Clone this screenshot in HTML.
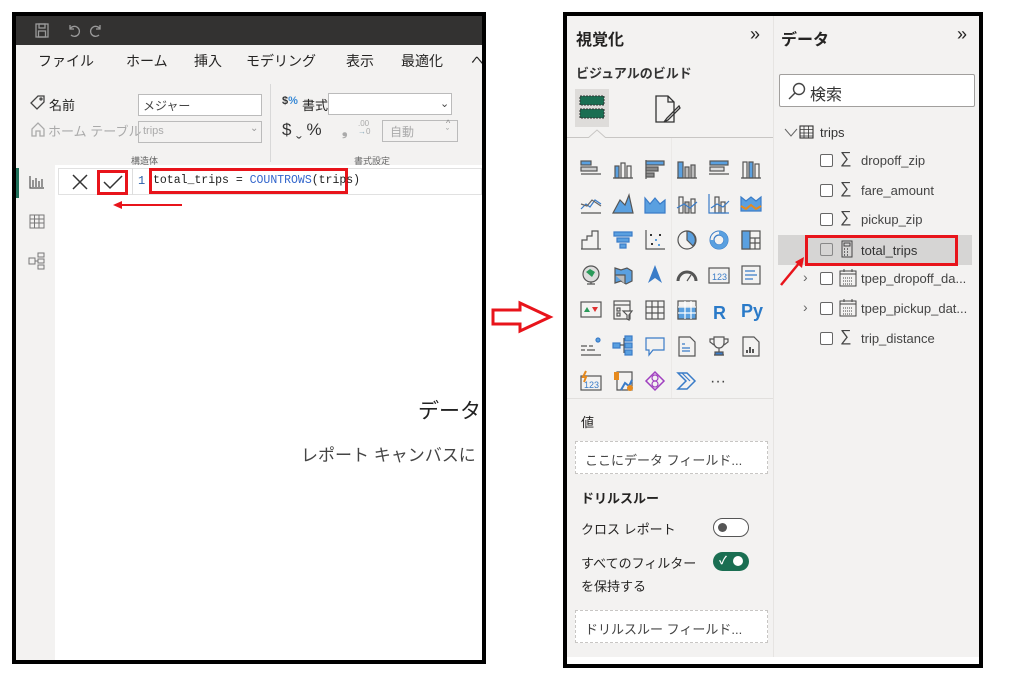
<!DOCTYPE html>
<html><head><meta charset="utf-8"><style>
*{margin:0;padding:0;box-sizing:border-box}
body{width:1024px;height:700px;background:#fff;position:relative;overflow:hidden;font-family:"Liberation Sans","Noto Sans CJK JP",sans-serif;color:#252423}
.a{position:absolute}
.t{position:absolute;white-space:nowrap}
.mono{font-family:"Liberation Mono","Noto Sans CJK JP",monospace}
</style></head><body>

<!-- LEFT PANEL -->
<div class="a" style="left:12px;top:12px;width:474px;height:652px;border:4px solid #000;background:#fff;overflow:hidden">
  <div class="a" style="left:0;top:0;width:466px;height:29px;background:#333231"></div>
  <svg class="a" style="left:18px;top:6px" width="80" height="18" viewBox="0 0 80 18" fill="none" stroke="#9a9a9a" stroke-width="1.3">
    <rect x="2" y="2" width="12" height="13"/><rect x="5" y="2" width="6" height="4"/><rect x="4.5" y="9" width="7" height="6"/>
    <path d="M36 7a5 5 0 1 1 1 6M36 3v4h4"/><path d="M66 7a5 5 0 1 0 -1 6M66 3v4h-4"/>
  </svg>
  <div class="a" style="left:0;top:29px;width:466px;height:120px;background:#f3f2f1"></div>
  <div class="t" style="left:22px;top:35px;font-size:14px">ファイル</div>
  <div class="t" style="left:110px;top:35px;font-size:14px">ホーム</div>
  <div class="t" style="left:178px;top:35px;font-size:14px">挿入</div>
  <div class="t" style="left:230px;top:35px;font-size:14px">モデリング</div>
  <div class="t" style="left:330px;top:35px;font-size:14px">表示</div>
  <div class="t" style="left:385px;top:35px;font-size:14px">最適化</div>
  <div class="t" style="left:455px;top:35px;font-size:14px">へ</div>
  <svg class="a" style="left:14px;top:79px" width="16" height="16" fill="none" stroke="#444" stroke-width="1.3"><path d="M8 1h6v6l-7 7-6-6z"/><circle cx="11" cy="4" r="1"/></svg>
  <div class="t" style="left:33px;top:79px;font-size:13px">名前</div>
  <div class="a" style="left:122px;top:78px;width:124px;height:22px;background:#fff;border:1px solid #bbb"></div>
  <div class="t" style="left:127px;top:81px;font-size:12px;color:#444">メジャー</div>
  <svg class="a" style="left:14px;top:105px" width="16" height="16" fill="none" stroke="#aaa" stroke-width="1.3"><path d="M2 8l6-6 6 6v7H10v-5H6v5H2z"/></svg>
  <div class="t" style="left:32px;top:105px;font-size:13px;color:#aaa">ホーム テーブル</div>
  <div class="a" style="left:122px;top:105px;width:124px;height:22px;border:1px solid #bbb"></div>
  <div class="t" style="left:127px;top:109px;font-size:11px;color:#aaa">trips</div>
  <div class="t" style="left:234px;top:107px;font-size:10px;color:#999">⌄</div>
  <div class="t" style="left:115px;top:138px;font-size:9px;color:#666">構造体</div>
  <div class="a" style="left:254px;top:68px;width:1px;height:78px;background:#d8d8d8"></div>
  <div class="t" style="left:266px;top:79px;font-size:11px;font-weight:bold;color:#333">$<span style="color:#3a8ad6">%</span></div>
  <div class="t" style="left:286px;top:79px;font-size:13px">書式</div>
  <div class="a" style="left:312px;top:77px;width:124px;height:22px;background:#fff;border:1px solid #bbb"></div>
  <div class="t" style="left:424px;top:81px;font-size:11px;color:#444">⌄</div>
  <div class="t" style="left:266px;top:104px;font-size:17px;color:#333">$ ˬ %</div>
  <div class="t" style="left:326px;top:106px;font-size:14px;color:#aaa;font-weight:bold">❟</div>
  <div class="t" style="left:342px;top:104px;font-size:8px;color:#aaa;line-height:8px">.00<br><span style="color:#8ab">→</span>0</div>
  <div class="a" style="left:366px;top:104px;width:76px;height:22px;border:1px solid #bbb"></div>
  <div class="t" style="left:374px;top:107px;font-size:12px;color:#aaa">自動</div>
  <div class="t" style="left:430px;top:103px;font-size:9px;color:#888;line-height:9px">^<br>ˇ</div>
  <div class="t" style="left:338px;top:138px;font-size:9px;color:#666">書式設定</div>

  <div class="a" style="left:0;top:149px;width:39px;height:503px;background:#f3f2f1"></div>
  <div class="a" style="left:0;top:152px;width:3px;height:30px;background:#1f6f5a"></div>
  <svg class="a" style="left:13px;top:159px" width="16" height="14" fill="none" stroke="#555" stroke-width="1.2"><path d="M1 1v12h14M4 12V5M7 12V3M10 12V6M13 12V4"/></svg>
  <svg class="a" style="left:13px;top:198px" width="16" height="15" fill="none" stroke="#777" stroke-width="1"><rect x="1" y="1" width="14" height="13"/><path d="M1 5h14M1 9h14M5.5 1v13M10 1v13"/></svg>
  <svg class="a" style="left:12px;top:236px" width="18" height="18" fill="none" stroke="#777" stroke-width="1"><rect x="1" y="6" width="6" height="6"/><rect x="10" y="1" width="6" height="4"/><rect x="10" y="7" width="6" height="4"/><rect x="10" y="13" width="6" height="4"/><path d="M7 9h3"/></svg>

  <div class="a" style="left:42px;top:152px;width:424px;height:27px;background:#fff;border:1px solid #e1e1e1"></div>
  <div class="a" style="left:116px;top:152px;width:1px;height:27px;background:#ddd"></div>
  <svg class="a" style="left:55px;top:157px" width="18" height="18" stroke="#333" stroke-width="1.5"><path d="M2 2l14 14M16 2L2 16"/></svg>
  <div class="a" style="left:81px;top:154px;width:31px;height:25px;border:3px solid #e8141b"></div>
  <svg class="a" style="left:86px;top:158px" width="22" height="16" fill="none" stroke="#333" stroke-width="1.5"><path d="M2 8l6 6L20 2"/></svg>
  <div class="t mono" style="left:122px;top:158px;font-size:12px;color:#2a5fa8">1</div>
  <div class="a" style="left:133px;top:152px;width:199px;height:26px;border:3px solid #e8141b"></div>
  <div class="t mono" style="left:137px;top:158px;font-size:11.5px;color:#222">total_trips = <span style="color:#3366cc">COUNTROWS</span>(trips)</div>
  <svg class="a" style="left:96px;top:184px" width="72" height="10"><path d="M70 5H8" stroke="#e8141b" stroke-width="2"/><path d="M1 5l9-4v8z" fill="#e8141b"/></svg>

  <div class="t" style="left:402px;top:379px;font-size:21px;color:#222">データ</div>
  <div class="t" style="left:285px;top:425px;font-size:17px;color:#444">レポート キャンバスに</div>
</div>

<svg class="a" style="left:490px;top:300px" width="66" height="34"><path d="M3 10h27V3l30 14-30 14v-7H3z" fill="#fff" stroke="#e8141b" stroke-width="3"/></svg>

<!-- RIGHT PANEL -->
<div class="a" style="left:563px;top:12px;width:420px;height:656px;border:4px solid #000;background:#f3f2f1;overflow:hidden">
  <div class="a" style="left:0;top:641px;width:412px;height:8px;background:#fff"></div>
  <div class="a" style="left:206px;top:0;width:1px;height:641px;background:#e6e4e2"></div>
  <div class="t" style="left:9px;top:10px;font-size:16px;font-weight:bold">視覚化</div>
  <div class="t" style="left:183px;top:8px;font-size:18px">»</div>
  <div class="t" style="left:9px;top:47px;font-size:13px;font-weight:bold;color:#333">ビジュアルのビルド</div>
  <div class="a" style="left:8px;top:73px;width:34px;height:38px;background:#dedcda"></div>
  <svg class="a" style="left:12px;top:78px" width="26" height="28"><rect x="1" y="2" width="24" height="9" fill="#1a6e52" stroke="#333" stroke-dasharray="2 1"/><rect x="1" y="15" width="24" height="9" fill="#1a6e52" stroke="#333" stroke-dasharray="2 1"/></svg>
  <svg class="a" style="left:86px;top:78px" width="30" height="32" fill="none" stroke="#333" stroke-width="1.3"><path d="M3 2h12l6 6v20H3zM15 2v6h6"/><path d="M26 12L14 24l-3 4 4-2 12-12z"/></svg>
  <div class="a" style="left:0;top:121px;width:206px;height:1px;background:#c8c6c4"></div>
  <svg class="a" style="left:21px;top:113px" width="18" height="9"><path d="M0 9L9 1l9 8" fill="#f3f2f1" stroke="#c8c6c4"/></svg>
  <div class="a" style="left:104px;top:122px;width:1px;height:260px;background:#ebe9e7"></div>

  <svg class="a" style="left:6px;top:134px" width="200" height="250" font-family="Liberation Sans,sans-serif">
    <g stroke="#555" stroke-width="1.2" fill="none">
    <g transform="translate(8,10)"><rect x="0" y="1" width="10" height="4" fill="#5aa0e0"/><rect x="0" y="7" width="16" height="4" fill="#ccc"/><path d="M0 14h20"/></g>
    <g transform="translate(40,10)"><rect x="2" y="6" width="4" height="12" fill="#5aa0e0"/><rect x="8" y="3" width="4" height="15"/><rect x="14" y="6" width="4" height="12"/><path d="M0 18h20"/></g>
    <g transform="translate(72,10)"><path d="M1 0v19"/><rect x="1" y="1" width="18" height="4" fill="#5aa0e0"/><rect x="1" y="7" width="12" height="4" fill="#888"/><rect x="1" y="13" width="8" height="4" fill="#888"/></g>
    <g transform="translate(104,10)"><rect x="1" y="2" width="5" height="16" fill="#5aa0e0"/><rect x="8" y="7" width="4" height="11" fill="#bbb"/><rect x="14" y="5" width="4" height="13" fill="#bbb"/><path d="M0 18h20"/></g>
    <g transform="translate(136,10)"><rect x="1" y="1" width="18" height="4" fill="#5aa0e0"/><rect x="1" y="7" width="14" height="4" fill="#ddd"/><path d="M0 14h20"/></g>
    <g transform="translate(168,10)"><rect x="2" y="2" width="4" height="16"/><rect x="8" y="2" width="4" height="16" fill="#5aa0e0"/><rect x="14" y="4" width="4" height="14"/><path d="M0 18h20"/></g>
    <g transform="translate(8,44)"><path d="M0 15l5-5 4 3 5-7 6 4" stroke="#3a7cc8"/><path d="M0 10l6 2 5-6 9 6" stroke="#666"/><path d="M0 19h20"/></g>
    <g transform="translate(40,44)"><path d="M0 19l7-13 5 5 4-10 4 18z" fill="#5aa0e0"/></g>
    <g transform="translate(72,44)"><path d="M0 4l5 6 5-6 5 6 5-4v13H0z" fill="#5aa0e0" stroke="#3a7cc8"/></g>
    <g transform="translate(104,44)"><rect x="2" y="3" width="4" height="16"/><rect x="8" y="8" width="4" height="11" fill="#bbb"/><rect x="14" y="5" width="4" height="14"/><path d="M0 14l7-4 6 4 7-6" stroke="#3a7cc8"/></g>
    <g transform="translate(136,44)"><rect x="6" y="3" width="4" height="16"/><rect x="12" y="8" width="4" height="11"/><path d="M0 0v19h20M2 14l6-4 6 3 6-6" stroke="#3a7cc8"/></g>
    <g transform="translate(168,44)"><path d="M0 3l5 4 5-4 5 4 5-4v14H0z" fill="#5aa0e0" stroke="#3a7cc8"/><path d="M0 12l5 3 5-4 5 4 5-3" stroke="#e68a1e" stroke-width="2"/></g>
    <g transform="translate(8,80)"><path d="M1 19V10h5v-4h5v-5h6v18"/><path d="M0 19h20"/></g>
    <g transform="translate(40,80)"><path d="M1 2h18v4H1zM4 8h12v4H4zM7 14h6v4H7z" fill="#5aa0e0" stroke="#3a7cc8"/></g>
    <g transform="translate(72,80)"><path d="M1 0v19h19"/><rect x="5" y="4" width="2" height="2" fill="#333" stroke="none"/><rect x="10" y="9" width="2" height="2" fill="#5aa0e0" stroke="none"/><rect x="14" y="4" width="2" height="2" fill="#333" stroke="none"/><rect x="6" y="13" width="2" height="2" fill="#333" stroke="none"/><rect x="13" y="14" width="2" height="2" fill="#5aa0e0" stroke="none"/></g>
    <g transform="translate(104,80)"><circle cx="10" cy="10" r="9"/><path d="M10 1a9 9 0 0 1 6 15L10 10z" fill="#5aa0e0"/></g>
    <g transform="translate(136,80)"><circle cx="10" cy="10" r="9" stroke="#3a7cc8" stroke-width="1"/><circle cx="10" cy="10" r="5" stroke="#3a7cc8"/><path d="M10 1a9 9 0 1 1 -9 9h4a5 5 0 1 0 5 -5z" fill="#5aa0e0" stroke="none"/></g>
    <g transform="translate(168,80)"><rect x="1" y="1" width="18" height="18"/><rect x="1" y="1" width="8" height="18" fill="#5aa0e0"/><path d="M9 8h10M9 13h10M14 8v11"/></g>
    <g transform="translate(8,115)"><circle cx="10" cy="9" r="8" fill="#ddd"/><path d="M5 7l4-3 5 3-3 5z" fill="#2a9a5a" stroke="none"/><path d="M6 19h8M10 17v2"/></g>
    <g transform="translate(40,115)"><path d="M2 3l6 2 6-2 5 3v10l-6 3-5-3-6 2z" fill="#5aa0e0" stroke="#555"/><path d="M2 10h10v9" fill="#bbb"/></g>
    <g transform="translate(72,115)"><path d="M10 0L3 18l7-5 7 5z" fill="#3a7cc8" stroke="none"/></g>
    <g transform="translate(104,115)"><path d="M1 16a9 9 0 0 1 18 0" stroke-width="3"/><path d="M10 16l4-6"/></g>
    <g transform="translate(136,115)"><rect x="0" y="3" width="20" height="15"/><text x="3" y="15" font-size="9" fill="#3a7cc8" stroke="none">123</text></g>
    <g transform="translate(168,115)"><rect x="1" y="1" width="18" height="18"/><path d="M4 6h10M4 10h12M4 14h8" stroke="#3a7cc8"/></g>
    <g transform="translate(8,150)"><rect x="0" y="2" width="20" height="15"/><path d="M3 12l3-5 3 5z" fill="#2a9a5a" stroke="none"/><path d="M11 7h6l-3 5z" fill="#e03030" stroke="none"/></g>
    <g transform="translate(40,150)"><rect x="1" y="1" width="16" height="18"/><path d="M1 5h16"/><rect x="4" y="8" width="3" height="3"/><rect x="4" y="13" width="3" height="3"/><path d="M10 11h9l-3 4v5l-2-1v-4z" fill="#f3f2f1"/></g>
    <g transform="translate(72,150)"><rect x="1" y="1" width="18" height="18"/><path d="M1 7h18M1 13h18M7 1v18M13 1v18"/></g>
    <g transform="translate(104,150)"><rect x="1" y="1" width="18" height="18"/><rect x="1" y="7" width="18" height="12" fill="#5aa0e0"/><path d="M1 7h18M1 13h18M8 1v18M14 1v18" stroke="#fff"/></g>
    <text x="140" y="169" font-size="18" font-weight="bold" fill="#2a7ac8" stroke="none">R</text>
    <text x="168" y="167" font-size="18" font-weight="bold" fill="#2a7ac8" stroke="none">Py</text>
    <g transform="translate(8,186)"><path d="M0 10h6M8 10h4M0 14h4M6 14h8M0 19h20"/><circle cx="17" cy="4" r="2" fill="#5aa0e0" stroke="#3a7cc8"/></g>
    <g transform="translate(40,186)"><rect x="0" y="7" width="7" height="5" fill="#5aa0e0" stroke="#3a7cc8"/><path d="M7 9h4M11 2v15"/><rect x="12" y="0" width="7" height="5" fill="#5aa0e0" stroke="#3a7cc8"/><rect x="12" y="7" width="7" height="5" fill="#5aa0e0" stroke="#3a7cc8"/><rect x="12" y="14" width="7" height="5" fill="#5aa0e0" stroke="#3a7cc8"/></g>
    <g transform="translate(72,186)"><path d="M1 2h18v12H8l-4 5v-5H1z" stroke="#3a7cc8"/></g>
    <g transform="translate(104,186)"><path d="M2 1h11l5 5v14H2z"/><path d="M5 8h3M5 12h8M5 15h8" stroke="#3a7cc8"/></g>
    <g transform="translate(136,186)"><path d="M5 1h10v6a5 5 0 0 1-10 0zM5 3H1v3l4 3M15 3h4v3l-4 3M10 12v4M5 19h10"/><rect x="6" y="16" width="8" height="3" fill="#3a7cc8"/></g>
    <g transform="translate(168,186)"><path d="M2 1h11l5 5v14H2z"/><path d="M6 17v-3M9 17v-6M12 17v-4" stroke-width="2"/></g>
    <g transform="translate(8,221)"><rect x="0" y="5" width="20" height="14"/><text x="3" y="17" font-size="9" fill="#3a7cc8" stroke="none">123</text><path d="M5 0l-3 6h3l-2 5" stroke="#e68a1e" stroke-width="2"/></g>
    <g transform="translate(40,221)"><path d="M4 1h15v18H4z"/><path d="M8 19l4-7 4 3 3-6" stroke="#3a7cc8" stroke-width="2"/><rect x="1" y="1" width="5" height="8" fill="#e68a1e" stroke="none"/><circle cx="17" cy="17" r="3" fill="#e68a1e" stroke="none"/></g>
    <g transform="translate(72,221)"><path d="M10 1l9 9-9 9-9-9z" stroke="#a040c0" stroke-width="1.5"/><circle cx="10" cy="7" r="3" stroke="#a040c0"/><circle cx="10" cy="13" r="3" stroke="#a040c0"/></g>
    <g transform="translate(104,221)"><path d="M1 2h9l8 8-8 8H1l8-8z" stroke="#3a7cc8" stroke-width="1.5"/><path d="M5 2l8 8" stroke="#3a7cc8"/></g>
    <text x="137" y="236" font-size="16" fill="#444" stroke="none">···</text>
    </g>
  </svg>
  <div class="a" style="left:0;top:382px;width:206px;height:1px;background:#e1dfdd"></div>
  <div class="t" style="left:14px;top:396px;font-size:13px">値</div>
  <div class="a" style="left:8px;top:425px;width:193px;height:33px;background:#fff;border:1px dashed #c8c6c4"></div>
  <div class="t" style="left:18px;top:434px;font-size:13px;color:#444">ここにデータ フィールド...</div>
  <div class="t" style="left:14px;top:472px;font-size:13px;font-weight:bold">ドリルスルー</div>
  <div class="t" style="left:14px;top:503px;font-size:13px">クロス レポート</div>
  <div class="a" style="left:146px;top:502px;width:36px;height:19px;border:1px solid #555;border-radius:10px;background:#fff"></div>
  <div class="a" style="left:151px;top:507px;width:9px;height:9px;border-radius:50%;background:#555"></div>
  <div class="t" style="left:14px;top:537px;font-size:13px">すべてのフィルター</div>
  <div class="a" style="left:146px;top:536px;width:36px;height:19px;border-radius:10px;background:#1a6e52"></div>
  <div class="t" style="left:152px;top:536px;font-size:11px;color:#fff;font-weight:bold">✓</div>
  <div class="a" style="left:166px;top:540px;width:10px;height:10px;border-radius:50%;background:#fff"></div>
  <div class="t" style="left:14px;top:560px;font-size:13px">を保持する</div>
  <div class="a" style="left:8px;top:594px;width:193px;height:33px;background:#fff;border:1px dashed #c8c6c4"></div>
  <div class="t" style="left:18px;top:603px;font-size:13px;color:#444">ドリルスルー フィールド...</div>

  <div class="t" style="left:214px;top:10px;font-size:16px;font-weight:bold">データ</div>
  <div class="t" style="left:390px;top:8px;font-size:18px">»</div>
  <div class="a" style="left:212px;top:58px;width:196px;height:33px;background:#fff;border:1px solid #a19f9d;border-radius:2px"></div>
  <svg class="a" style="left:221px;top:66px" width="18" height="18" fill="none" stroke="#444" stroke-width="1.4"><circle cx="11" cy="7" r="5.5"/><path d="M7 11L1 17"/></svg>
  <div class="t" style="left:243px;top:65px;font-size:16px;color:#333">検索</div>
  <svg class="a" style="left:217px;top:112px" width="14" height="10" fill="none" stroke="#666"><path d="M1 1l6 7 6-7"/></svg>
  <svg class="a" style="left:232px;top:109px" width="15" height="14" fill="none" stroke="#333" stroke-width="1.1"><rect x="1" y="1" width="13" height="12"/><path d="M1 4.5h13M1 8h13M1 11h13M5 1v12M9.5 1v12" stroke-width=".8"/></svg>
  <div class="t" style="left:253px;top:109px;font-size:13px;color:#333">trips</div>

  <div class="a" style="left:211px;top:219px;width:194px;height:30px;background:#d6d5d4"></div>
  <div class="a" style="left:238px;top:219px;width:153px;height:31px;border:3px solid #e8141b"></div>
  <svg class="a" style="left:211px;top:238px" width="30" height="34"><path d="M3 31L22 8" stroke="#e8141b" stroke-width="2.5"/><path d="M26 3l-2 11-7-6z" fill="#e8141b"/></svg>

  <div class="a" style="left:253px;top:138px;width:13px;height:13px;border:1px solid #666;border-radius:2px;background:#fff"></div>
  <div class="t" style="left:273px;top:134px;font-size:16px;color:#444">∑</div>
  <div class="t" style="left:294px;top:137px;font-size:13px;color:#444">dropoff_zip</div>

  <div class="a" style="left:253px;top:168px;width:13px;height:13px;border:1px solid #666;border-radius:2px;background:#fff"></div>
  <div class="t" style="left:273px;top:164px;font-size:16px;color:#444">∑</div>
  <div class="t" style="left:294px;top:167px;font-size:13px;color:#444">fare_amount</div>

  <div class="a" style="left:253px;top:197px;width:13px;height:13px;border:1px solid #666;border-radius:2px;background:#fff"></div>
  <div class="t" style="left:273px;top:193px;font-size:16px;color:#444">∑</div>
  <div class="t" style="left:294px;top:196px;font-size:13px;color:#444">pickup_zip</div>

  <div class="a" style="left:253px;top:227px;width:13px;height:13px;border:1px solid #888;border-radius:2px;background:#d6d5d4"></div>
  <svg class="a" style="left:274px;top:224px" width="12" height="18" fill="none" stroke="#444"><rect x="1" y="1" width="10" height="16"/><rect x="3" y="3" width="6" height="3"/><path d="M3 9h1M6 9h1M3 12h1M6 12h1M3 15h1M6 15h1" stroke-width="1.5"/></svg>
  <div class="t" style="left:294px;top:227px;font-size:13px;color:#333">total_trips</div>

  <div class="t" style="left:236px;top:253px;font-size:14px;color:#666">›</div>
  <div class="a" style="left:253px;top:256px;width:13px;height:13px;border:1px solid #666;border-radius:2px;background:#fff"></div>
  <svg class="a" style="left:272px;top:253px" width="18" height="18" fill="none" stroke="#444"><rect x="1" y="2" width="16" height="15"/><path d="M1 5h16M5 0v3M13 0v3"/><path d="M4 9h10M4 12h10M4 15h10" stroke-dasharray="1 1"/></svg>
  <div class="t" style="left:294px;top:255px;font-size:13px;color:#444">tpep_dropoff_da...</div>

  <div class="t" style="left:236px;top:283px;font-size:14px;color:#666">›</div>
  <div class="a" style="left:253px;top:286px;width:13px;height:13px;border:1px solid #666;border-radius:2px;background:#fff"></div>
  <svg class="a" style="left:272px;top:283px" width="18" height="18" fill="none" stroke="#444"><rect x="1" y="2" width="16" height="15"/><path d="M1 5h16M5 0v3M13 0v3"/><path d="M4 9h10M4 12h10M4 15h10" stroke-dasharray="1 1"/></svg>
  <div class="t" style="left:294px;top:285px;font-size:13px;color:#444">tpep_pickup_dat...</div>

  <div class="a" style="left:253px;top:316px;width:13px;height:13px;border:1px solid #666;border-radius:2px;background:#fff"></div>
  <div class="t" style="left:273px;top:312px;font-size:16px;color:#444">∑</div>
  <div class="t" style="left:294px;top:315px;font-size:13px;color:#444">trip_distance</div>
</div>
</body></html>
